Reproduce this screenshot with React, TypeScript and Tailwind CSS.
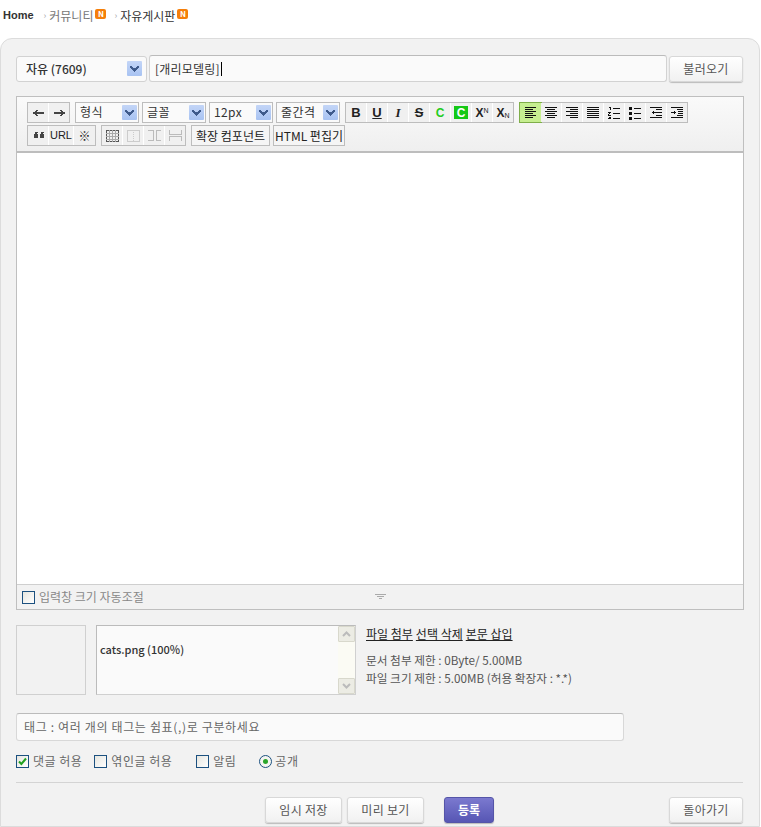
import type { ReactNode } from "react";

const font = "font-['Noto_Sans_CJK_KR','Liberation_Sans',sans-serif]";

function Badge() {
  return (
    <span className="mb-1 ml-[2px] flex h-[10px] w-[11px] items-center justify-center rounded-[2px] bg-[#f57f0a] text-[8px] leading-none font-bold text-white">
      N
    </span>
  );
}

function Arrow() {
  return (
    <span className="flex h-[15px] w-[15px] shrink-0 items-center justify-center rounded-[1px] bg-gradient-to-b from-[#c3d5f7] to-[#a8c3f2]">
      <svg width="9" height="6" viewBox="0 0 9 6" shapeRendering="crispEdges">
        <path d="M0 0h2v1h1v1h3V1h1V0h2v2H8v1H7v1H6v1H5v1H4V5H3V4H2V3H1V2H0z" fill="#3f5b8c" />
      </svg>
    </span>
  );
}

function ToolSelect({ label }: { label: string }) {
  return (
    <div className="flex h-[21px] w-[64px] items-center justify-between border border-[#bdbdbd] bg-[#fafafa] pr-[1px] pl-[4px] text-[12px] text-[#333]">
      <span className="-mt-px tracking-[0.4px]">{label}</span>
      <Arrow />
    </div>
  );
}

function Tool({ children, w = 21, active }: { children: ReactNode; w?: number; active?: boolean }) {
  return (
    <div
      style={{ width: w }}
      className={
        active
          ? "flex h-full items-center justify-center bg-[#c6ee90] outline outline-1 outline-[#7fae4a]"
          : "flex h-full items-center justify-center border-r border-white bg-[#f0f0f0] last:border-r-0"
      }
    >
      {children}
    </div>
  );
}

function Group({ children }: { children: ReactNode }) {
  return <div className="flex h-[21px] border border-[#bdbdbd] bg-[#f0f0f0]">{children}</div>;
}

function Glyph({ d, w = 13, h = 13, fill = "#222" }: { d: string; w?: number; h?: number; fill?: string }) {
  return (
    <svg width={w} height={h} viewBox={`0 0 ${w} ${h}`} shapeRendering="crispEdges">
      <path d={d} fill={fill} />
    </svg>
  );
}

function Lines({ rows }: { rows: [number, number][] }) {
  return <Glyph d={rows.map(([x, l], i) => `M${x} ${i * 2 + 1}h${l}v1h-${l}z`).join("")} w={14} h={14} fill="#111" />;
}

function PlainButton({ label, w }: { label: string; w: number }) {
  return (
    <button
      style={{ width: w }}
      className="h-[26px] rounded-[3px] border border-[#d8d8d8] bg-gradient-to-b from-white to-[#f1f1f1] text-[12px] tracking-[0.3px] text-[#555] shadow-[0_1px_1px_#bbb]"
    >
      {label}
    </button>
  );
}

function Check({ checked, label, gap = "" }: { checked?: boolean; label: string; gap?: string }) {
  return (
    <div className={`flex items-center gap-[4px] ${gap}`}>
      <span className="flex h-[13px] w-[13px] items-center justify-center border border-[#1c5180] bg-gradient-to-br from-[#e6e6e0] to-white">
        {checked && (
          <svg width="9" height="9" viewBox="0 0 9 9">
            <path d="M1 4.5 L3.4 7 L8 1.5" fill="none" stroke="#21a121" strokeWidth="2" />
          </svg>
        )}
      </span>
      <span>{label}</span>
    </div>
  );
}

export default function App() {
  return (
    <main className={`flex h-screen w-screen flex-col overflow-hidden bg-white ${font}`}>
      <nav className="flex h-[38px] shrink-0 items-center pb-[7px] pl-[3px] text-[12px]">
        <b className="font-['Liberation_Sans',sans-serif] text-[11px] text-[#333]">Home</b>
        <span className="mr-[3px] ml-[10px] text-[9px] text-[#aaa]">›</span>
        <span className="text-[#777]">커뮤니티</span>
        <Badge />
        <span className="mr-[3px] ml-[8px] text-[9px] text-[#aaa]">›</span>
        <span className="text-[#333]">자유게시판</span>
        <Badge />
      </nav>

      <section className="mr-px flex-1 rounded-t-[12px] border border-[#dcdcdc] bg-[#f2f2f2] pt-[16px] pr-[16px] pl-[15px]">
        <div className="flex items-center">
          <div className="flex h-[26px] w-[131px] items-center justify-between rounded-[3px] border border-[#d2d2d2] bg-[#fafafa] pr-[4px] pl-[9px] text-[12px] font-medium text-[#333]">
            <span>자유 (7609)</span>
            <Arrow />
          </div>
          <div className="ml-[2px] flex h-[27px] w-[518px] items-center rounded-[3px] border border-[#d2d2d2] border-t-[#bbb] bg-[#fafafa] pl-[5px] text-[12px] tracking-[0.2px] text-[#333]">
            [개리모델링]<span className="ml-px h-[14px] w-px bg-black" />
          </div>
          <div className="ml-[2px]">
            <PlainButton label="불러오기" w={74} />
          </div>
        </div>

        <div className="mt-[14px] flex h-[514px] w-[728px] flex-col border border-[#bfbfbf] bg-white">
          <div className="flex h-[56px] shrink-0 flex-col gap-[2px] border-b-2 border-[#bdbdbd] bg-gradient-to-b from-[#fafafa] to-[#efefef] pt-[5px] pl-[10px] text-[#222]">
            <div className="flex items-center">
              <Group>
                <Tool>
                  <Glyph d="M1 6h2V5h1V4h2v1H5v1h7v2H5v1h1v1H4V9H3V8H1z" fill="#444" />
                </Tool>
                <Tool w={20}>
                  <Glyph d="M12 6h-2V5H9V4H7v1h1v1H1v2h7v1H7v1h2V9h1V8h2z" fill="#444" />
                </Tool>
              </Group>
              <div className="ml-[5px] flex gap-[3px]">
                <ToolSelect label="형식" />
                <ToolSelect label="글꼴" />
                <ToolSelect label="12px" />
                <ToolSelect label="줄간격" />
              </div>
              <div className="ml-[5px]">
                <Group>
                  <Tool><b className="font-['Liberation_Sans',sans-serif] text-[13px]">B</b></Tool>
                  <Tool><b className="font-['Liberation_Sans',sans-serif] text-[13px] underline">U</b></Tool>
                  <Tool><b className="font-['Liberation_Serif',serif] text-[13px] italic">I</b></Tool>
                  <Tool><b className="font-['Liberation_Sans',sans-serif] text-[13px] line-through">S</b></Tool>
                  <Tool><b className="font-['Liberation_Sans',sans-serif] text-[12px] text-[#22cc22]">C</b></Tool>
                  <Tool>
                    <b className="flex h-[13px] w-[14px] items-center justify-center bg-[#16c916] font-['Liberation_Sans',sans-serif] text-[12px] text-white">C</b>
                  </Tool>
                  <Tool>
                    <b className="font-['Liberation_Sans',sans-serif] text-[12px]">X<sup className="text-[7px] font-normal">N</sup></b>
                  </Tool>
                  <Tool w={20}>
                    <b className="font-['Liberation_Sans',sans-serif] text-[12px]">X<sub className="text-[7px] font-normal">N</sub></b>
                  </Tool>
                </Group>
              </div>
              <div className="ml-[5px]">
                <Group>
                  <Tool active><Lines rows={[[1, 11], [1, 8], [1, 11], [1, 8], [1, 11], [1, 8]]} /></Tool>
                  <Tool><Lines rows={[[1, 12], [3, 8], [1, 12], [3, 8], [1, 12], [3, 8]]} /></Tool>
                  <Tool><Lines rows={[[1, 12], [5, 8], [1, 12], [5, 8], [1, 12], [5, 8]]} /></Tool>
                  <Tool><Lines rows={[[1, 12], [1, 12], [1, 12], [1, 12], [1, 12], [1, 12]]} /></Tool>
                  <Tool>
                    <Glyph w={14} h={14} fill="#111" d="M2 1h2v3H3V2H2zM6 2h7v1H6zM1 6h3v1H3v1H2v1h2v1H1V8h1V7h1H1zM6 7h7v1H6zM1 11h3v2H1v-1h2zM6 12h7v1H6z" />
                  </Tool>
                  <Tool>
                    <Glyph w={14} h={14} fill="#111" d="M1 1h3v3H1zM6 2h7v1H6zM1 6h3v3H1zM6 7h7v1H6zM1 11h3v3H1zM6 12h7v1H6z" />
                  </Tool>
                  <Tool>
                    <Glyph w={14} h={14} fill="#111" d="M1 1h12v1H1zM7 3h6v1H7zM4 5h1v1h8v1H5v1H4V7H3V6h1zM7 9h6v1H7zM1 11h12v1H1z" />
                  </Tool>
                  <Tool w={20}>
                    <Glyph w={14} h={14} fill="#111" d="M1 1h12v1H1zM7 3h6v1H7zM1 6h3V5h1v1h1v1H5v1H4V7H1zM8 5h5v1H8zM8 7h5v1H8zM7 9h6v1H7zM1 11h12v1H1z" />
                  </Tool>
                </Group>
              </div>
            </div>

            <div className="flex items-center">
              <Group>
                <Tool>
                  <Glyph w={11} h={9} fill="#444" d="M2 1h3v1H4v1h1v4H1V3h1zM8 1h3v1h-1v1h1v4H7V3h1z" />
                </Tool>
                <Tool w={25}><span className="font-['Liberation_Sans',sans-serif] text-[11px]">URL</span></Tool>
                <Tool><span className="text-[12px]">※</span></Tool>
              </Group>
              <div className="ml-[5px]">
                <Group>
                  <Tool>
                    <svg width="13" height="12" viewBox="0 0 13 12" shapeRendering="crispEdges" fill="none" stroke="#555">
                      <rect x="0.5" y="0.5" width="12" height="11" />
                      <path d="M0 3.5h13M0 6.5h13M0 9.5h13M3.5 0v12M6.5 0v12M9.5 0v12" stroke="#aaa" />
                    </svg>
                  </Tool>
                  <Tool>
                    <svg width="13" height="12" viewBox="0 0 13 12" shapeRendering="crispEdges" fill="none" stroke="#ccc">
                      <rect x="0.5" y="0.5" width="12" height="11" />
                      <path d="M6.5 0v12" strokeDasharray="1 1" />
                    </svg>
                  </Tool>
                  <Tool>
                    <svg width="13" height="11" viewBox="0 0 13 11" shapeRendering="crispEdges" fill="none" stroke="#bbb">
                      <path d="M0 .5h5v10H0M13 .5H8v10h5" />
                    </svg>
                  </Tool>
                  <Tool w={20}>
                    <svg width="13" height="11" viewBox="0 0 13 11" shapeRendering="crispEdges" fill="none" stroke="#bbb">
                      <path d="M.5 0v4.5h12V0M.5 11V6.5h12V11" />
                    </svg>
                  </Tool>
                </Group>
              </div>
              <div className="ml-[5px]">
                <Group>
                  <div className="flex w-[77px] items-center justify-center bg-[#f5f5f5] text-[12px] text-[#222]">확장 컴포넌트</div>
                </Group>
              </div>
              <div className="ml-[3px]">
                <Group>
                  <div className="flex w-[70px] items-center justify-center bg-[#f5f5f5] text-[12px] text-[#222]">HTML 편집기</div>
                </Group>
              </div>
            </div>
          </div>

          <div className="flex-1 bg-white" />

          <div className="relative flex h-[25px] shrink-0 items-center border-t border-[#cfcfcf] bg-[#f2f2f2] pl-[5px] text-[12px] text-[#888]">
            <Check label="입력창 크기 자동조절" />
            <svg className="absolute top-[9px] left-[358px]" width="11" height="6" viewBox="0 0 11 6" shapeRendering="crispEdges">
              <path d="M0 0h11v1H0zM2 2h7v1H2zM4 4h3v1H4z" fill="#aaa" />
            </svg>
          </div>
        </div>

        <div className="mt-[15px] flex">
          <div className="h-[70px] w-[70px] border border-[#d0d0d0] bg-[#f2f2f2]" />
          <div className="ml-[10px] flex h-[70px] w-[260px] border border-[#d0d0d0] border-t-[#bbb] border-l-[#bbb] bg-[#fafafa]">
            <div className="flex-1 pt-[15px] pl-[3px] text-[11px] font-medium text-[#333]">cats.png (100%)</div>
            <div className="flex w-[17px] flex-col justify-between bg-[#fbfbf4]">
              <div className="flex h-[16px] items-center justify-center rounded-[1px] border border-[#d8d8cc] bg-[#ecece4]">
                <svg width="9" height="6" viewBox="0 0 9 6"><path d="M1 5l3.5-3.5L8 5" fill="none" stroke="#bbb" strokeWidth="2" /></svg>
              </div>
              <div className="flex h-[16px] items-center justify-center rounded-[1px] border border-[#d8d8cc] bg-[#ecece4]">
                <svg width="9" height="6" viewBox="0 0 9 6"><path d="M1 1l3.5 3.5L8 1" fill="none" stroke="#bbb" strokeWidth="2" /></svg>
              </div>
            </div>
          </div>
          <div className="ml-[10px] text-[11.7px] leading-[18px] text-[#555]">
            <div className="flex gap-[3px] text-[12px] text-[#222] underline">
              <span>파일 첨부</span>
              <span>선택 삭제</span>
              <span>본문 삽입</span>
            </div>
            <div className="mt-[8px]">문서 첨부 제한 : 0Byte/ 5.00MB</div>
            <div>파일 크기 제한 : 5.00MB (허용 확장자 : *.*)</div>
          </div>
        </div>

        <div className="mt-[18px] flex h-[28px] w-[608px] items-center rounded-[3px] border border-[#d8d8d8] border-t-[#bbb] bg-[#fafafa] pl-[7px] text-[12px] tracking-[0.65px] text-[#666]">
          태그 : 여러 개의 태그는 쉼표(,)로 구분하세요
        </div>

        <div className="mt-[13px] flex h-[14px] items-center text-[12px] tracking-[0.5px] text-[#666]">
          <Check checked label="댓글 허용" />
          <Check label="엮인글 허용" gap="ml-[12px]" />
          <Check label="알림" gap="ml-[24px]" />
          <div className="ml-[23px] flex items-center gap-[3px]">
            <span className="flex h-[13px] w-[13px] items-center justify-center rounded-full border border-[#1c5180] bg-[#f5f5f0]">
              <span className="h-[5px] w-[5px] rounded-full bg-[#2aa52a]" />
            </span>
            <span>공개</span>
          </div>
        </div>

        <div className="mt-[14px] flex items-center border-t border-[#d4d4d4] pt-[13px]">
          <div className="ml-[249px]">
            <PlainButton label="임시 저장" w={77} />
          </div>
          <div className="ml-[5px]">
            <PlainButton label="미리 보기" w={77} />
          </div>
          <button className="ml-[20px] h-[26px] w-[50px] rounded-[3px] border border-[#5555a8] bg-gradient-to-b from-[#7b79cf] to-[#5756b4] text-[12px] font-bold text-white shadow-[0_1px_1px_#bbb]">
            등록
          </button>
          <div className="ml-auto">
            <PlainButton label="돌아가기" w={74} />
          </div>
        </div>
      </section>
    </main>
  );
}
